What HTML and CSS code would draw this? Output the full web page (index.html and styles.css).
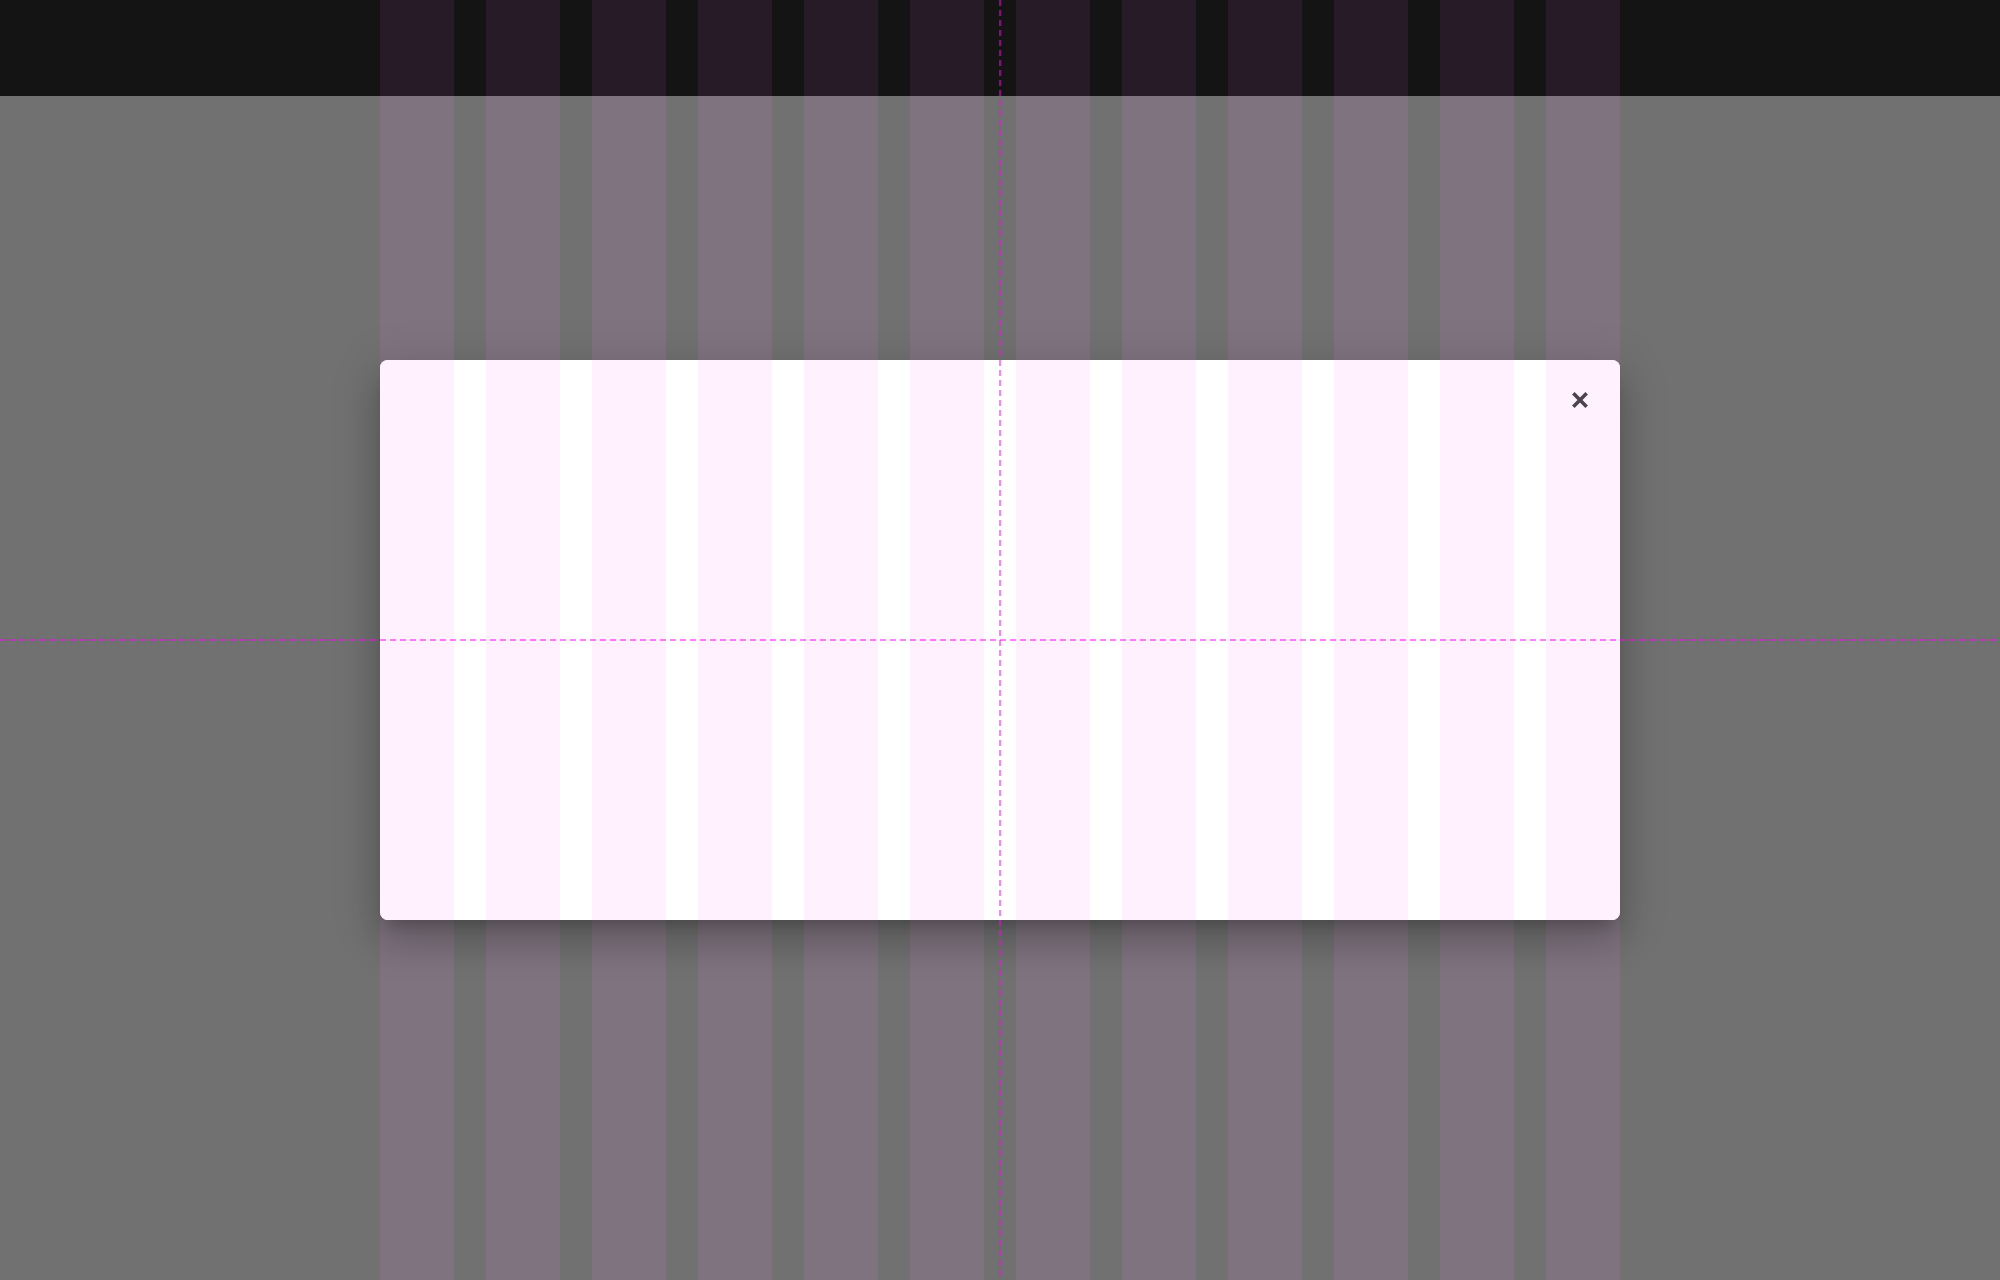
FILE: index.html
```html
<!DOCTYPE html>
<html lang="en">
<head>
<meta charset="utf-8">
<title>Dialog grid</title>
<link rel="stylesheet" href="styles.css">
</head>
<body>
  <header class="topbar">
    <div class="grid">
      <span class="col col--top"></span><span class="col col--top"></span><span class="col col--top"></span><span class="col col--top"></span>
      <span class="col col--top"></span><span class="col col--top"></span><span class="col col--top"></span><span class="col col--top"></span>
      <span class="col col--top"></span><span class="col col--top"></span><span class="col col--top"></span><span class="col col--top"></span>
    </div>
  </header>
  <main class="stage">
    <div class="grid">
      <span class="col col--stage"></span><span class="col col--stage"></span><span class="col col--stage"></span><span class="col col--stage"></span>
      <span class="col col--stage"></span><span class="col col--stage"></span><span class="col col--stage"></span><span class="col col--stage"></span>
      <span class="col col--stage"></span><span class="col col--stage"></span><span class="col col--stage"></span><span class="col col--stage"></span>
    </div>
  </main>

  <div class="scrim">
    <div class="dialog" role="dialog">
      <div class="grid">
        <span class="col col--dialog"></span><span class="col col--dialog"></span><span class="col col--dialog"></span><span class="col col--dialog"></span>
        <span class="col col--dialog"></span><span class="col col--dialog"></span><span class="col col--dialog"></span><span class="col col--dialog"></span>
        <span class="col col--dialog"></span><span class="col col--dialog"></span><span class="col col--dialog"></span><span class="col col--dialog"></span>
      </div>
      <button class="close" aria-label="Close">
        <svg viewBox="0 0 16 16" width="16" height="16" aria-hidden="true">
          <path d="M2.6 2.6 L13.4 13.4 M13.4 2.6 L2.6 13.4" stroke="currentColor" stroke-width="3.6" stroke-linecap="square" fill="none"/>
        </svg>
      </button>
    </div>
  </div>

  <div class="guide guide--v"></div>
  <div class="guide guide--h"></div>
</body>
</html>
```

FILE: styles.css
```css
html, body {
  margin: 0;
  padding: 0;
  height: 100%;
}

body {
  display: flex;
  flex-direction: column;
  height: 100vh;
  background: #717171;
  font-family: "Roboto", "Liberation Sans", sans-serif;
  overflow: hidden;
}

.topbar {
  height: 96px;
  flex: none;
  background: #141414;
}

.stage {
  flex: 1;
  background: #717171;
}

.grid {
  display: grid;
  grid-template-columns: repeat(12, 74px);
  column-gap: 32px;
  width: 1240px;
  height: 100%;
  margin: 0 auto;
}

.col {
  display: block;
  height: 100%;
}

.col--top { background: #271b27; }
.col--stage { background: #7f737f; }
.col--dialog { background: #fff1fd; }

.scrim {
  position: fixed;
  inset: 0;
  display: flex;
  align-items: center;
  justify-content: center;
}

.dialog {
  position: relative;
  width: 1240px;
  height: 560px;
  background: #ffffff;
  border-radius: 8px;
  overflow: hidden;
  box-shadow:
    0 11px 15px -7px rgba(0, 0, 0, 0.2),
    0 24px 38px 3px rgba(0, 0, 0, 0.14),
    0 9px 46px 8px rgba(0, 0, 0, 0.12);
}

.close {
  position: absolute;
  top: 16px;
  right: 16px;
  width: 48px;
  height: 48px;
  padding: 0;
  border: 0;
  background: transparent;
  color: #4b4350;
  display: flex;
  align-items: center;
  justify-content: center;
  cursor: pointer;
}

.close svg {
  display: block;
}

.guide {
  position: fixed;
  pointer-events: none;
}

.guide--v {
  top: 0;
  bottom: 0;
  left: 999px;
  width: 2px;
  background: repeating-linear-gradient(to bottom,
    rgba(255, 0, 255, 0.5) 0 6px, transparent 6px 10px);
}

.guide--h {
  left: 0;
  right: 0;
  top: 639px;
  height: 2px;
  background: repeating-linear-gradient(to right,
    rgba(255, 0, 255, 0.5) 0 6px, transparent 6px 10px);
}
```
